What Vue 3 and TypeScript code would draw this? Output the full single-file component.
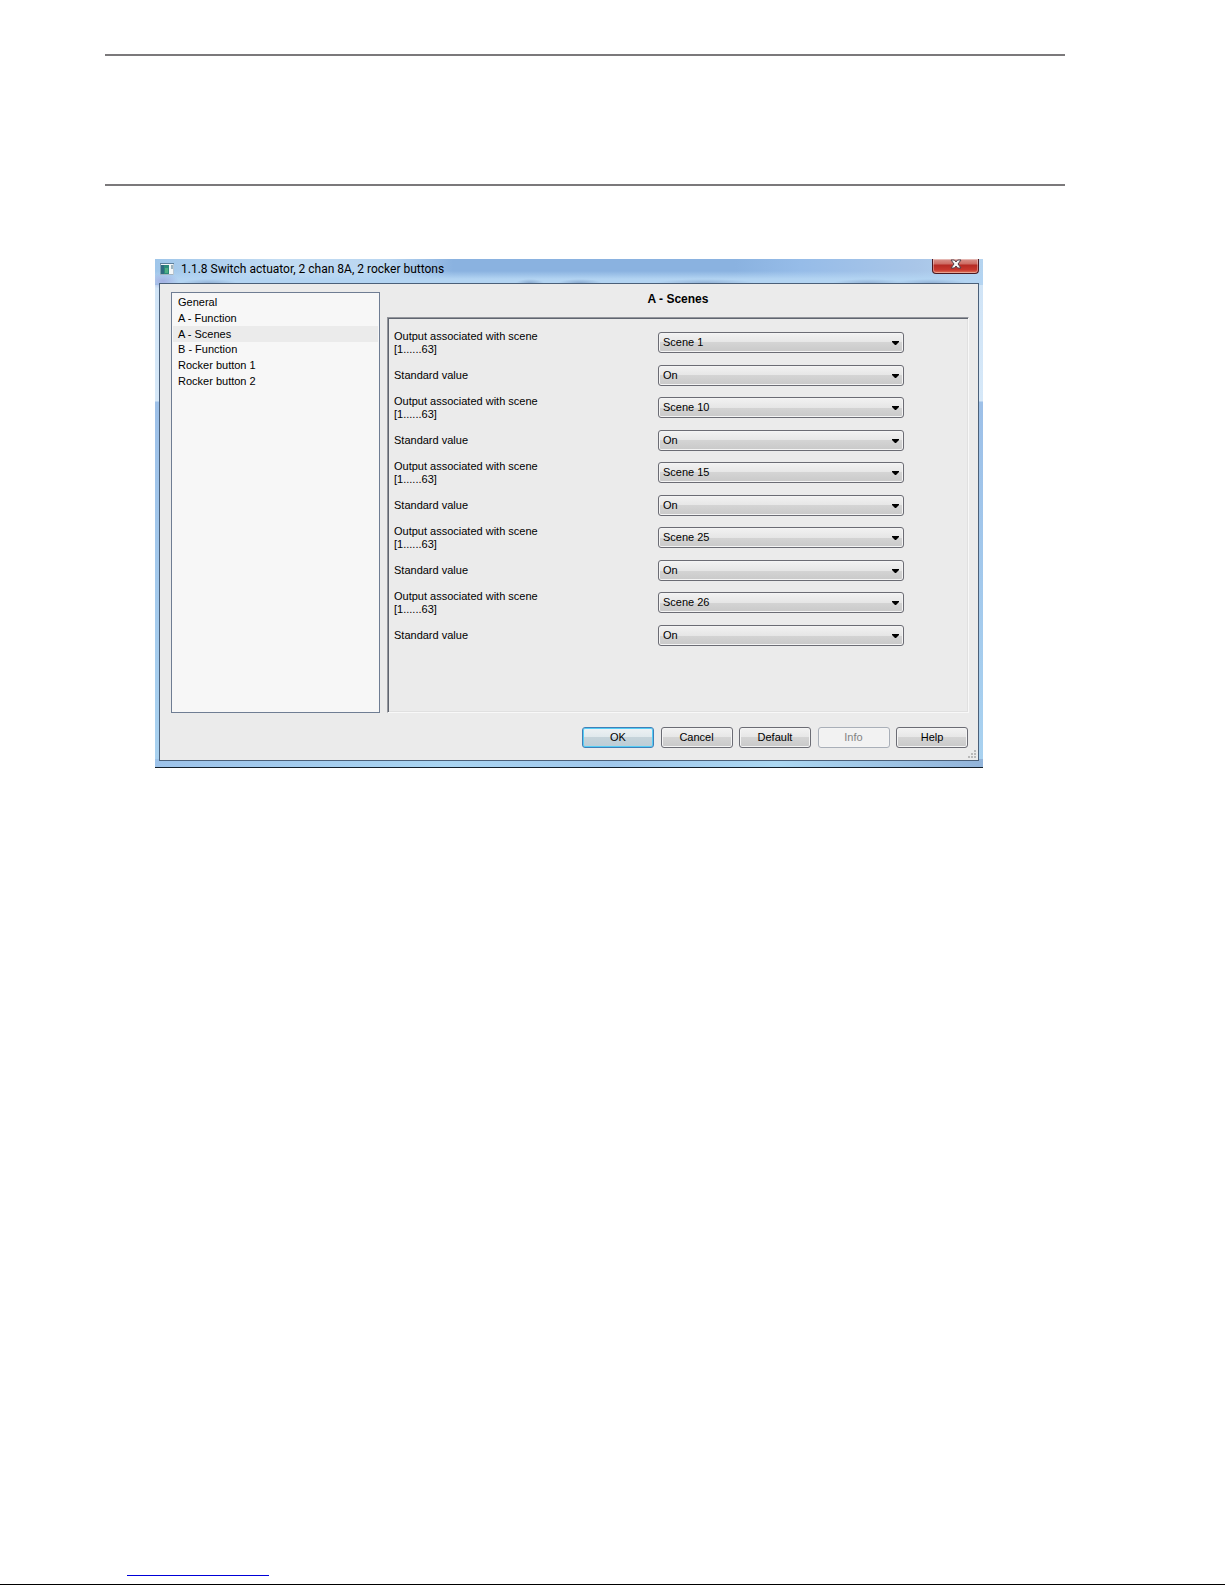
<script setup lang="ts">
import { ref } from 'vue'

interface Param {
  id: string
  label: string
  value: string
  options: string[]
}

const sections = ['General', 'A - Function', 'A - Scenes', 'B - Function', 'Rocker button 1', 'Rocker button 2']
const current = ref('A - Scenes')

const scenes = Array.from({ length: 63 }, (_, i) => `Scene ${i + 1}`)

const params = ref<Param[]>(
  [1, 10, 15, 25, 26].flatMap((n) => [
    {
      id: `scene-${n}`,
      label: 'Output associated with scene\n[1......63]',
      value: `Scene ${n}`,
      options: scenes,
    },
    { id: `value-${n}`, label: 'Standard value', value: 'On', options: ['On', 'Off'] },
  ]),
)
</script>

<template>
  <div class="page">
    <header class="banner"></header>

    <section class="dialog" role="dialog" aria-labelledby="dialog-title">
      <div class="titlebar">
        <svg class="app-icon" viewBox="0 0 14 12" aria-hidden="true">
          <rect x="0" y="0" width="14" height="12" fill="#f4f7f8" />
          <rect x="0" y="0" width="14" height="1" fill="#5c7f9c" />
          <rect x="0" y="1" width="1" height="11" fill="#7a99b0" />
          <rect x="1" y="2" width="8" height="9" fill="#2d8a7b" />
          <rect x="1" y="2" width="3" height="9" fill="#2f6a80" />
          <rect x="5" y="5" width="3" height="5" fill="#4fae84" />
          <rect x="11" y="2" width="2" height="4" fill="#9fb4bd" />
          <rect x="0" y="11" width="14" height="1" fill="#a3b3bf" />
          <rect x="13" y="1" width="1" height="11" fill="#b9c7d2" />
        </svg>
        <h1 id="dialog-title" class="title">1.1.8 Switch actuator, 2 chan 8A, 2 rocker buttons</h1>
        <button type="button" class="close" aria-label="Close">
          <svg viewBox="0 0 12 10" aria-hidden="true">
            <path
              d="M1 1H4.4L6 3L7.6 1H11L8 5L11 9H7.6L6 7L4.4 9H1L4 5Z"
              fill="#f7f7f7"
              stroke="#53404a"
              stroke-width="1"
            />
          </svg>
        </button>
      </div>

      <div class="client">
        <div class="body">
          <ul class="sections">
            <li v-for="name in sections" :key="name">
              <button
                type="button"
                class="section"
                :class="{ selected: name === current }"
                @click="current = name"
              >
                {{ name }}
              </button>
            </li>
          </ul>

          <div class="content">
            <h2 class="heading">{{ current }}</h2>
            <div class="panel">
              <div v-for="p in params" :key="p.id" class="row">
                <label :for="p.id" class="label">{{ p.label }}</label>
                <div class="field">
                  <select :id="p.id" v-model="p.value" class="select">
                    <option v-for="o in p.options" :key="o">{{ o }}</option>
                  </select>
                  <svg class="arrow" viewBox="0 0 7 4" aria-hidden="true"><path d="M0 0H7V1L4 4H3L0 1Z" /></svg>
                </div>
              </div>
            </div>
          </div>
        </div>

        <footer class="actions">
          <button type="button" class="btn primary">OK</button>
          <button type="button" class="btn">Cancel</button>
          <button type="button" class="btn">Default</button>
          <button type="button" class="btn" disabled>Info</button>
          <button type="button" class="btn">Help</button>
        </footer>

        <svg class="grip" viewBox="0 0 8 8" aria-hidden="true">
          <path d="M6 0h2v2H6zM3 3h2v2H3zM6 3h2v2H6zM0 6h2v2H0zM3 6h2v2H3zM6 6h2v2H6z" fill="#b9b9b9" />
        </svg>
      </div>
    </section>

    <div class="page-foot">
      <div class="link-rule"></div>
    </div>
  </div>
</template>

<style>
body {
  margin: 0;
  background: #fff;
}
</style>

<style scoped>
* {
  box-sizing: border-box;
}

.page {
  display: flex;
  flex-direction: column;
  min-height: 100vh;
  padding: 54px 160px 0 105px;
  border-bottom: 1px solid #000;
  font: 11px/13px 'Liberation Sans', Arial, sans-serif;
  color: #000;
}

.banner {
  height: 132px;
  border-top: 2px solid #7b797b;
  border-bottom: 2px solid #7b797b;
}

.dialog {
  margin: 73px 82px 0 50px;
  padding: 0 4px 6px;
  border-bottom: 1px solid #14202b;
  background:
    radial-gradient(ellipse 14px 4px at 375px 24px, #8aaad0, transparent),
    radial-gradient(ellipse 22px 4px at 425px 24px, #8aaad0, transparent),
    radial-gradient(ellipse 50px 4px at 550px 24px, #93b2d6, transparent),
    radial-gradient(ellipse 36px 4px at 714px 24px, #93b2d6, transparent),
    radial-gradient(ellipse 36px 4px at 776px 24px, #93b2d6, transparent),
    radial-gradient(ellipse 28px 4px at 54px 24px, #93b2d6, transparent),
    radial-gradient(ellipse 16px 8px at 8px 22px, #a3b0e2, transparent),
    linear-gradient(180deg, transparent 12px, #b3d4f2 20px, #b3d4f2 24px, transparent 25px) 0 0 / 100% 26px no-repeat,
    linear-gradient(90deg, #9fc6ea, #c3dcf2 15%, #b9d6f1 28%, #8ab2e0 36%, #8ab2e0 70%, #96bce8 78%, #a9c6e8 92%, #b5d4f0) 0 0 /
      100% 26px no-repeat,
    linear-gradient(90deg, #9dc3ea, #a9d5f2 35%, #a0c8ec 55%, #acd8f2 75%, #92b4da) 0 100% / 100% 8px no-repeat,
    linear-gradient(180deg, #cfe3f6 0, #d6e8f8 142px, #9dc0e8 143px, #a9d2f0);
}

.titlebar {
  display: flex;
  align-items: flex-start;
  height: 24px;
}

.app-icon {
  width: 14px;
  height: 12px;
  margin: 4px 7px 0 1px;
}

.title {
  flex: 1;
  margin: 0;
  font: 400 12px/20px Roboto, 'Open Sans', sans-serif;
  white-space: nowrap;
}

.close {
  display: flex;
  justify-content: center;
  width: 47px;
  height: 15px;
  padding: 0;
  border: 1px solid #4a1820;
  border-top: 0;
  border-radius: 0 0 4px 4px;
  background: linear-gradient(#d9938c, #cd6a62 5px, #b52a24 6px, #c8382e 11px, #e07a5e);
  box-shadow: inset 0 0 0 1px rgb(255 255 255 / 35%);
}

.close svg {
  width: 12px;
  height: 10px;
}

.client {
  position: relative;
  padding: 8px 9px 12px 11px;
  border: 1px solid #4b6079;
  background: #ebebeb;
}

.body {
  display: flex;
  gap: 7px;
}

.sections {
  display: grid;
  grid-template-rows: repeat(6, 1fr);
  flex: none;
  width: 209px;
  height: 421px;
  margin: 0;
  padding: 2px 1px 323px;
  border: 1px solid #6f7d93;
  background: #f7f7f7;
  list-style: none;
}

.sections li {
  display: flex;
}

.section {
  width: 100%;
  padding: 0 5px;
  border: 0;
  background: none;
  font: inherit;
  color: inherit;
  text-align: left;
}

.section.selected {
  background: #ebebeb;
}

.content {
  display: flex;
  flex: 1;
  flex-direction: column;
}

.heading {
  margin: 0;
  height: 25px;
  font: 700 12px/14px 'Liberation Sans', Arial, sans-serif;
  text-align: center;
}

.panel {
  flex: 1;
  padding: 8px 64px 0 6px;
  border: 1px solid;
  border-color: #94969c #f8f8f8 #f8f8f8 #94969c;
  box-shadow:
    inset 1px 1px #5f6570,
    inset -1px -1px #e0e0e0;
}

.row {
  display: flex;
  align-items: center;
  justify-content: space-between;
  height: 32px;
}

.row:nth-child(odd) {
  height: 33px;
}

.label {
  white-space: pre-line;
}

.field {
  position: relative;
  width: 246px;
}

.select {
  display: block;
  width: 100%;
  height: 21px;
  padding: 0 4px;
  border: 1px solid #6b6c74;
  border-radius: 3px;
  background: linear-gradient(#f2f2f2, #e6e6e6 50%, #d4d4d4 50%, #c9c9c9);
  box-shadow: inset 0 0 0 1px #f4f4f4;
  font: inherit;
  color: inherit;
  appearance: none;
}

.arrow {
  position: absolute;
  top: 9px;
  right: 5px;
  width: 7px;
  height: 4px;
  pointer-events: none;
}

.actions {
  display: flex;
  justify-content: space-between;
  width: 386px;
  margin: 14px 1px 0 auto;
}

.btn {
  width: 72px;
  height: 21px;
  padding: 0;
  border: 1px solid #6b6c74;
  border-radius: 3px;
  background: linear-gradient(#f2f2f2, #e6e6e6 50%, #d4d4d4 50%, #c9c9c9);
  box-shadow: inset 0 0 0 1px #f4f4f4;
  font: inherit;
  color: #000;
}

.btn.primary {
  border-color: #3f7fb8;
  background: linear-gradient(#eef2f4, #dfe8ec 50%, #c5d3da 50%, #bccdd6);
  box-shadow: inset 0 0 0 1px #55cdf5;
}

.btn:disabled {
  border-color: #a9afb8;
  background: #f2f2f2;
  color: #838383;
}

.grip {
  position: absolute;
  right: 2px;
  bottom: 2px;
  width: 8px;
  height: 8px;
}

.page-foot {
  margin-top: auto;
  padding: 0 0 8px 22px;
}

.link-rule {
  width: 142px;
  height: 1px;
  background: #0000d8;
}
</style>
